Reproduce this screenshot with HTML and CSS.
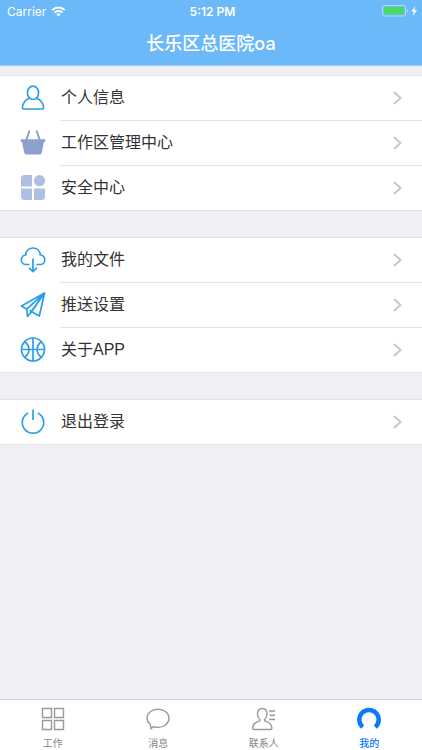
FILE: index.html
```
<!DOCTYPE html>
<html lang="zh-CN">
<head>
  <meta charset="utf-8">
  <meta name="viewport" content="width=device-width, initial-scale=1">
  <title>长乐区总医院oa</title>
  <link rel="stylesheet" href="styles.css">
</head>
<body>
  <header class="header">
    <div class="status-bar">
      <div class="carrier">
        <span>Carrier</span>
        <svg width="15" height="11" viewBox="0 0 14 11" fill="none" stroke="#fff" stroke-width="2">
          <path d="M.7 4.1a9 9 0 0 1 12.6 0M3 6.600a5.800 5.800 0 0 1 8 0"/>
          <path d="M4.800 8.200a3.200 3.200 0 0 1 4.400 0L7 10.600z" fill="#fff" stroke="none"/>
        </svg>
      </div>
      <span class="time">5:12 PM</span>
      <div class="battery">
        <svg width="36" height="12" viewBox="0 0 36 12">
          <rect x=".5" y=".5" width="23" height="10.5" rx="2" fill="none" stroke="#b5dcfc"/>
          <rect x="2" y="2" width="20" height="7.5" rx="1" fill="#4cd964"/>
          <path d="M25 4c1.5.5 1.5 3 0 3.5z" fill="#b5dcfc"/>
          <path d="M33.200 1 29.300 6.500h2.500l-1 4.500 4.200-5.800h-2.700z" fill="#fff"/>
        </svg>
      </div>
    </div>
    <h1>长乐区总医院oa</h1>
  </header>

  <main class="content">
    <ul class="group">
      <li>
        <a href="#" class="row">
          <svg class="icon" viewBox="0 0 26 26">
            <ellipse cx="13" cy="7.800" rx="5.600" ry="6.700"/>
            <path d="M9.500 13.200C5.500 14.600 2.900 17.500 2.400 22.500q0 1.500 1.300 1.500h18.600q1.300 0 1.300-1.500c-.5-5-3.100-7.900-7.100-9.300"/>
          </svg>
          <span class="label">个人信息</span>
          <svg class="arrow" viewBox="0 0 9 14"><path d="m1 1 6.500 6L1 13"/></svg>
        </a>
      </li>
      <li>
        <a href="#" class="row">
          <svg class="icon solid" viewBox="0 0 26 26">
            <path class="basket" d="M.8 9.300h24.400v2.800h-1.300l-2 10.200q-.5 2.200-2.600 2.200H6.700q-2.200 0-2.600-2.200l-2-10.200H.8z"/>
            <path class="handle" d="M9.200 1.200 6.300 10M16.800 1.200l2.900 8.800"/>
          </svg>
          <span class="label">工作区管理中心</span>
          <svg class="arrow" viewBox="0 0 9 14"><path d="m1 1 6.500 6L1 13"/></svg>
        </a>
      </li>
      <li>
        <a href="#" class="row">
          <svg class="icon solid" viewBox="0 0 26 26">
            <path class="tile" d="M4.500 0H12v11.500H1v-8Q1 0 4.500 0zM1 13.500h11V25H4.500Q1 25 1 21.500zM14 13.500h11v8q0 3.500-3.500 3.500H14z"/>
            <circle class="tile" cx="19.500" cy="5.700" r="5.600"/>
          </svg>
          <span class="label">安全中心</span>
          <svg class="arrow" viewBox="0 0 9 14"><path d="m1 1 6.500 6L1 13"/></svg>
        </a>
      </li>
    </ul>

    <ul class="group">
      <li>
        <a href="#" class="row">
          <svg class="icon" viewBox="0 0 26 26">
            <path d="M9.500 17.500H6.200C3.300 17.500 1.300 15.400 1.300 12.900c0-2.700 2-4.700 4.400-4.900C6 3.800 9 1 13 1s7 2.800 7.300 7c2.600.2 4.500 2.200 4.500 4.900 0 2.500-2 4.600-4.900 4.600h-3.400"/>
            <path d="M13 11.500v13M9 20.800l4 3.800 4-3.800"/>
          </svg>
          <span class="label">我的文件</span>
          <svg class="arrow" viewBox="0 0 9 14"><path d="m1 1 6.500 6L1 13"/></svg>
        </a>
      </li>
      <li>
        <a href="#" class="row">
          <svg class="icon plane" viewBox="0 0 26 26">
            <path d="M24.500 1 1.500 14l5.300 3.200zM24.500 1 6.800 17.200l.7 7.200 4.300-5zM24.500 1 11.300 19.400l8 4.600zM11.300 19.400l-1.800-1.100"/>
          </svg>
          <span class="label">推送设置</span>
          <svg class="arrow" viewBox="0 0 9 14"><path d="m1 1 6.500 6L1 13"/></svg>
        </a>
      </li>
      <li>
        <a href="#" class="row">
          <svg class="icon" viewBox="0 0 26 26">
            <circle cx="13" cy="12.500" r="11.500"/>
            <path d="M13 1v23M1.500 12.500h23M4.600 4.700c5.800 4 5.800 11.600 0 15.600M21.400 4.700c-5.800 4-5.800 11.600 0 15.600"/>
          </svg>
          <span class="label">关于APP</span>
          <svg class="arrow" viewBox="0 0 9 14"><path d="m1 1 6.500 6L1 13"/></svg>
        </a>
      </li>
    </ul>

    <ul class="group">
      <li>
        <a href="#" class="row">
          <svg class="icon" viewBox="0 0 26 26">
            <path d="M8.200 3.900a10.700 10.700 0 1 0 9.600 0M13 .5v10.500"/>
          </svg>
          <span class="label">退出登录</span>
          <svg class="arrow" viewBox="0 0 9 14"><path d="m1 1 6.500 6L1 13"/></svg>
        </a>
      </li>
    </ul>
  </main>

  <nav class="tab-bar">
    <a href="#" class="tab">
      <svg viewBox="0 0 24 24">
        <path d="M1.500 1.500h9v9h-9zM13.500 1.500h9v9h-9zM1.500 13.500h9v9h-9zM13.500 13.500h9v9h-9z"/>
      </svg>
      <span>工作</span>
    </a>
    <a href="#" class="tab">
      <svg viewBox="0 0 24 24">
        <path d="M4.300 17.200C2.200 15.600 1 13.600 1 11.200 1 6.200 5.900 2.200 12 2.200s11 4 11 9-4.900 9.200-11 9.200c-1.600 0-3.100-.3-4.500-.8L5 21.600z"/>
      </svg>
      <span>消息</span>
    </a>
    <a href="#" class="tab">
      <svg viewBox="0 0 24 24">
        <path d="M7.800 12.300C6.400 11.200 5.500 9.400 5.500 7c0-3.400 2-5.500 4.700-5.500S15 3.600 15 7c0 2.400-.9 4.200-2.300 5.300v1.500c4 1.200 6.900 3.300 7.100 6.700q.2 2-1.300 2H2q-1.500 0-1.300-2c.2-3.400 3.100-5.500 7.100-6.700z"/>
        <path d="M17 4h6M17.500 8.200H23M17 12.500h6"/>
      </svg>
      <span>联系人</span>
    </a>
    <a href="#" class="tab active">
      <svg viewBox="0 0 24 24">
        <path d="M5.700 20.100a9.700 9.700 0 1 1 12.600 0"/>
      </svg>
      <span>我的</span>
    </a>
  </nav>
</body>
</html>
```
FILE: styles.css
```
* {
  box-sizing: border-box;
}
body {
  margin: 0;
  min-height: 100vh;
  display: flex;
  flex-direction: column;
  background-color: #efeff4;
  color: #333;
  font-family: "Liberation Sans", "Noto Sans CJK SC", sans-serif;
}
a {
  color: inherit;
  text-decoration: none;
}

/* header */
.header {
  background-color: #6bb9f8;
  border-bottom: 1px solid #a9c8e6;
  color: #fff;
}
.status-bar {
  display: grid;
  grid-template-columns: 1fr auto 1fr;
  align-items: center;
  height: 22px;
  padding: 0 4px 0 7px;
  font-family: Inter, sans-serif;
  font-size: 12px;
}
.carrier {
  display: flex;
  align-items: center;
  gap: 5px;
}
.time {
  font-weight: 600;
}
.battery {
  display: flex;
  justify-content: flex-end;
}
h1 {
  margin: 0;
  font-family: Inter, "Noto Sans CJK SC", sans-serif;
  font-size: 18px;
  font-weight: 500;
  line-height: 43px;
  text-align: center;
}

/* settings list */
.content {
  flex: 1;
  display: flex;
  flex-direction: column;
  gap: 26px;
  padding-top: 9px;
}
.group {
  margin: 0;
  padding: 0;
  list-style: none;
  background-color: #fff;
  border-top: 1px solid #e2e2e5;
  border-bottom: 1px solid #e2e2e5;
}
.row {
  display: flex;
  align-items: center;
  height: 44px;
  padding: 0 20px;
}
.group li + li::before {
  content: "";
  display: block;
  height: 1px;
  margin-left: 60px;
  background-color: #e2e2e5;
}
.label {
  flex: 1;
  margin-left: 15px;
  font-size: 16px;
  line-height: 22px;
}
.icon {
  width: 26px;
  height: 26px;
  fill: none;
  stroke: #2b9fe6;
  stroke-width: 1.7;
}
.plane {
  stroke-linejoin: round;
}
.solid {
  stroke: none;
}
.basket {
  fill: #8c9fcd;
}
.handle {
  stroke: #8c9fcd;
  stroke-width: 2;
  stroke-linecap: round;
}
.tile {
  fill: #afbfe4;
}
.arrow {
  width: 9px;
  height: 14px;
  fill: none;
  stroke: #c7c7cc;
  stroke-width: 2;
}

/* bottom tabs */
.tab-bar {
  position: sticky;
  bottom: 0;
  display: flex;
  height: 51px;
  background-color: #fff;
  border-top: 1px solid #d0d0d4;
}
.tab {
  flex: 1;
  display: flex;
  flex-direction: column;
  align-items: center;
  gap: 5px;
  padding-top: 7px;
  color: #868686;
  font-family: "Noto Sans CJK SC", sans-serif;
  font-size: 10px;
  line-height: 14px;
}
.tab svg {
  width: 24px;
  height: 24px;
  fill: none;
  stroke: #9a9a9a;
  stroke-width: 1.4;
}
.tab.active {
  color: #0a7bf7;
  font-weight: 500;
}
.tab.active svg {
  stroke: #0a7bf7;
  stroke-width: 4.5;
}
```
